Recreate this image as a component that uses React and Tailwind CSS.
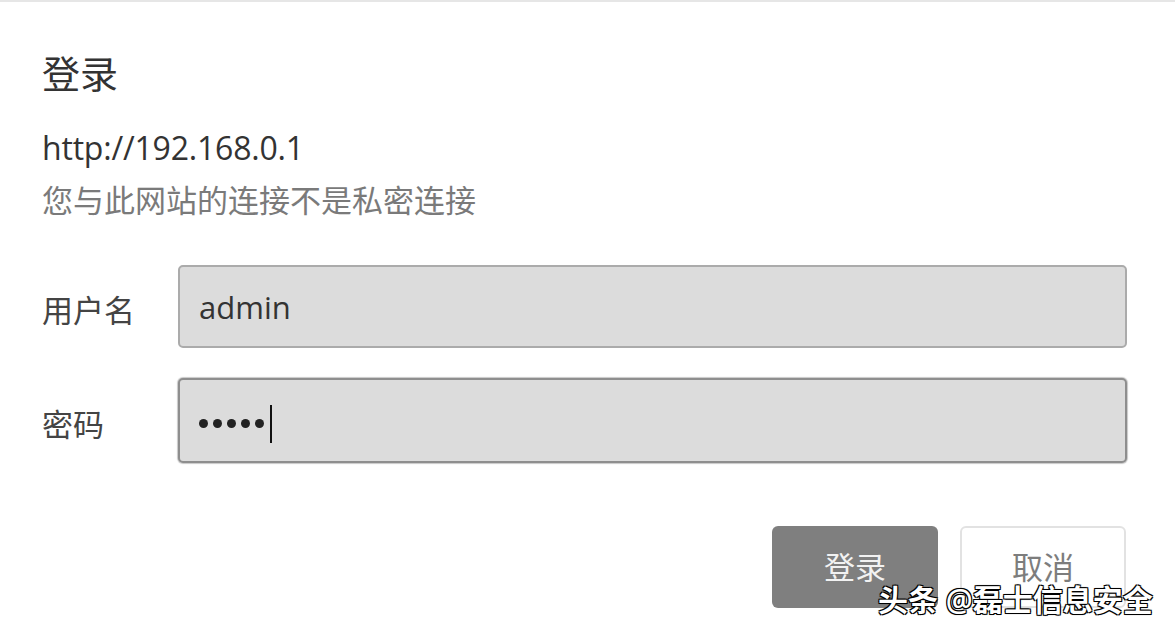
const FONT = "font-['Open_Sans','Noto_Sans_CJK_SC',sans-serif]";

const Field = ({ label, focused, children }) => (
  <div className="flex items-center">
    <div className="w-[136px] pt-[6px] text-[31px] leading-[40px] text-[#444]">{label}</div>
    <div
      className={`flex-1 flex items-center pl-[19px] rounded-[5px] bg-[#dcdcdc] ${
        focused
          ? "h-[85px] border-2 border-[#8e8e8e] shadow-[0_0_1px_1px_#c8c8c8]"
          : "h-[83px] border-2 border-[#ababab]"
      }`}
    >
      {children}
    </div>
  </div>
);

export default function App() {
  return (
    <div className={`relative w-full h-[631px] overflow-hidden bg-white border-t-2 border-[#e6e6e6] ${FONT}`}>
      <div className="pl-[42px] pr-[48px] pt-[51px]">
        <div className="text-[38px] leading-[40px] text-[#333]">登录</div>
        <div className="mt-[35px] text-[32px] leading-[40px] text-[#333] tracking-[-0.2px]">http://192.168.0.1</div>
        <div className="mt-[12px] text-[31px] leading-[40px] text-[#7a7a7a]">您与此网站的连接不是私密连接</div>

        <div className="mt-[45px] flex flex-col gap-[30px]">
          <Field label="用户名">
            <span className="text-[31px] leading-[40px] text-[#333]">admin</span>
          </Field>
          <Field label="密码" focused>
            <div className="flex items-center gap-[5px] pt-[6px]">
              {[0, 1, 2, 3, 4].map((i) => (
                <span key={i} className="w-[9px] h-[9px] rounded-full bg-[#222]" />
              ))}
            </div>
            <span className="ml-[6px] mt-[6px] w-[2px] h-[38px] bg-[#111]" />
          </Field>
        </div>

        <div className="mt-[63px] flex justify-end gap-[22px] pr-[1px]">
          <button className="w-[166px] h-[82px] rounded-[6px] bg-[#7f7f7f] text-[31px] text-[#f2f2f2]">
            登录
          </button>
          <button className="w-[166px] h-[82px] rounded-[6px] bg-white border-2 border-[#e2e2e2] text-[31px] text-[#7d7d7d]">
            取消
          </button>
        </div>
      </div>

      <div className="absolute left-[878px] top-[578px] text-[30px] leading-[40px] font-semibold text-white whitespace-nowrap [text-shadow:-1px_-1px_0_#000,1px_-1px_0_#000,-1px_1px_0_#000,1px_1px_0_#000,0_0_2px_#000]">
        头条 @磊士信息安全
      </div>
    </div>
  );
}
